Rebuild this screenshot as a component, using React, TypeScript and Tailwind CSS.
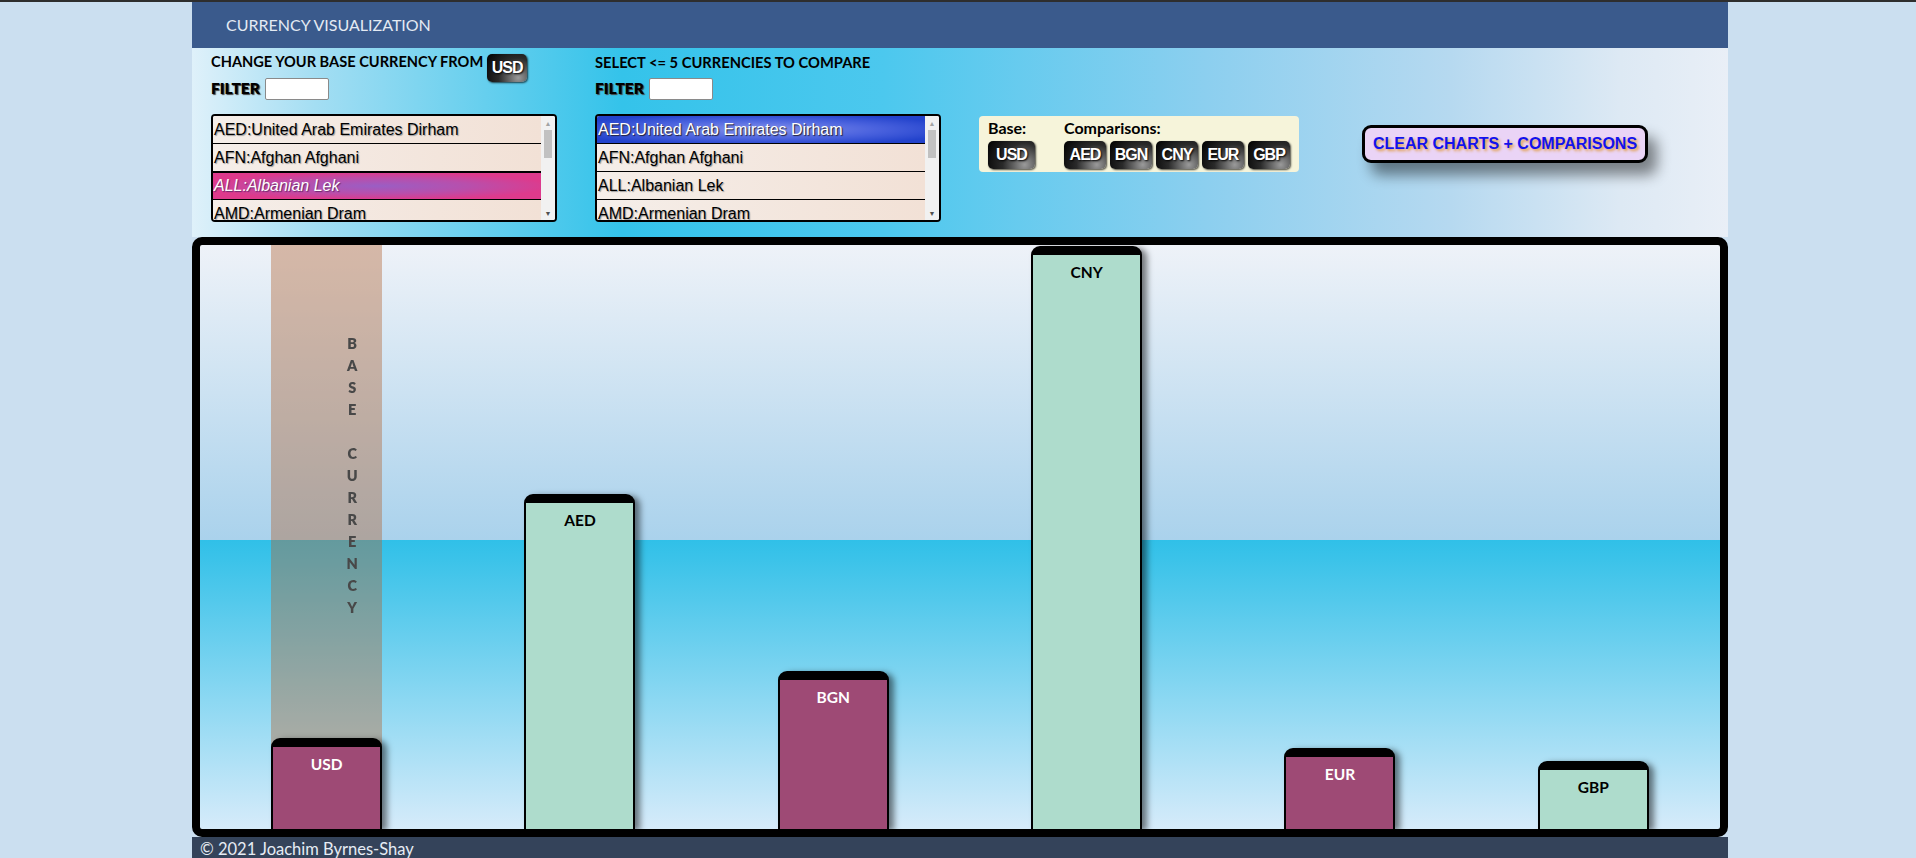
import React from 'react';

interface Bar {
  code: string;
  height: number;
  pink?: boolean;
  base?: boolean;
}

const bars: Bar[] = [
  { code: 'USD', height: 91, pink: true, base: true },
  { code: 'AED', height: 335 },
  { code: 'BGN', height: 158, pink: true },
  { code: 'CNY', height: 583 },
  { code: 'EUR', height: 81, pink: true },
  { code: 'GBP', height: 68 },
];

const currencies = [
  'AED:United Arab Emirates Dirham',
  'AFN:Afghan Afghani',
  'ALL:Albanian Lek',
  'AMD:Armenian Dram',
];

const comparisons = ['AED', 'BGN', 'CNY', 'EUR', 'GBP'];

function Badge({ code, width }: { code: string; width: string }) {
  return (
    <span
      className={`${width} inline-flex items-center justify-center h-[28px] rounded-[5px] bg-[radial-gradient(circle_at_78%_85%,#9a9a9a_0%,#2a2a2a_50%,#000_100%)] text-white font-bold text-[16px] font-['Liberation_Sans',Arial,sans-serif] tracking-[-1px] [text-shadow:1px_1px_2px_#000] shadow-[1px_1px_2px_rgba(0,0,0,0.7)]`}
    >
      {code}
    </span>
  );
}

function ListBox({ selected, variant }: { selected: number; variant: 'pink' | 'blue' }) {
  return (
    <div className="w-[346px] h-[108px] border-2 border-black rounded-[4px] bg-white flex overflow-hidden">
      <div className="flex-1 overflow-hidden">
        {currencies.map((c, i) => {
          const isSel = i === selected;
          let rowClass = 'bg-[linear-gradient(to_right,#f5eee9,#f2e1d6)] text-black [text-shadow:1px_1px_1px_#9a9a9a]';
          if (isSel && variant === 'pink') {
            rowClass = 'bg-[radial-gradient(ellipse_at_center,#9a5ec4_0%,#b84fac_40%,#de3a8c_75%)] text-white italic [text-shadow:1px_1px_1px_#6a2a6a] border-y border-[#7aa0e8]';
          }
          if (isSel && variant === 'blue') {
            rowClass = 'bg-[radial-gradient(ellipse_at_center,#8592ec_0%,#4a62de_50%,#2343cc_85%)] text-white [text-shadow:1px_1px_1px_#223]';
          }
          return (
            <div
              key={c}
              className={`${rowClass} h-[28px] border-b border-black flex items-center pl-[1px] text-[16px] font-['Liberation_Sans',Arial,sans-serif] whitespace-nowrap`}
            >
              {c}
            </div>
          );
        })}
      </div>
      <div className="w-[14px] bg-[#f1f1f1] flex flex-col items-center">
        <span className="text-[7px] leading-[14px] text-[#a3a3a3]">▲</span>
        <div className="w-[8px] h-[28px] bg-[#c1c1c1]" />
        <div className="flex-1" />
        <span className="text-[7px] leading-[14px] text-[#505050]">▼</span>
      </div>
    </div>
  );
}

function FilterRow() {
  return (
    <div className="flex items-center h-[22px] mt-[3px]">
      <span className="font-extrabold text-[15.5px] text-black [text-shadow:1px_1px_1px_#444] mr-[5px]">FILTER</span>
      <input className="w-[64px] h-[22px] bg-white border border-[#8a8a8a] rounded-[2px] outline-none" />
    </div>
  );
}

export default function App() {
  return (
    <div className="min-h-screen bg-[#cbdff0] border-t-2 border-[#2e2e2e] font-['Lato','Open_Sans',sans-serif]">
      <div className="ml-[192px] w-[1536px]">
        {/* Header */}
        <div className="h-[46px] bg-[#3a5a8c] flex items-center pl-[34px]">
          <span className="text-[16px] text-[#e4eaf3]">CURRENCY VISUALIZATION</span>
        </div>

        {/* Controls */}
        <div className="h-[189px] bg-[linear-gradient(to_right,#dff1fa_0%,#a4def3_8%,#34c3ea_28%,#4cc8ee_45%,#8ccfef_66%,#b6d9f0_82%,#dde9f4_93%,#e9eff7_100%)] flex pl-[19px] pt-[5px]">
          <div className="w-[384px]">
            <div className="flex items-start h-[22px]">
              <span className="font-bold text-[14.6px] leading-[18px] text-black">CHANGE YOUR BASE CURRENCY FROM</span>
              <span className="mt-[1px] ml-[4px]">
                <Badge code="USD" width="w-[40px]" />
              </span>
            </div>
            <FilterRow />
            <div className="mt-[14px]">
              <ListBox selected={2} variant="pink" />
            </div>
          </div>

          <div className="w-[384px]">
            <div className="flex items-start h-[22px]">
              <span className="font-bold text-[14.7px] leading-[18px] text-black">SELECT &lt;= 5 CURRENCIES TO COMPARE</span>
            </div>
            <FilterRow />
            <div className="mt-[14px]">
              <ListBox selected={0} variant="blue" />
            </div>
          </div>

          <div className="mt-[63px] w-[320px] h-[56px] bg-[#f6f4da] rounded-[4px] flex pl-[9px] pt-[2px] gap-[29px]">
            <div className="flex flex-col">
              <span className="font-bold text-[16px] leading-[20px] text-black">Base:</span>
              <div className="mt-[3px]">
                <Badge code="USD" width="w-[47px]" />
              </div>
            </div>
            <div className="flex flex-col">
              <span className="font-bold text-[16px] leading-[20px] text-black">Comparisons:</span>
              <div className="mt-[3px] flex gap-[4px]">
                {comparisons.map((c) => (
                  <Badge key={c} code={c} width="w-[42px]" />
                ))}
              </div>
            </div>
          </div>

          <div className="ml-[63px] mt-[72px]">
            <button className="w-[286px] h-[38px] bg-[#ead4f6] border-[3px] border-black rounded-[9px] shadow-[9px_12px_14px_rgba(0,0,0,0.45)] text-[#1212ee] font-bold text-[16px] font-['Liberation_Sans',Arial,sans-serif] [text-shadow:2px_2px_3px_#e09a3a]">
              CLEAR CHARTS + COMPARISONS
            </button>
          </div>
        </div>

        {/* Chart */}
        <div className="h-[600px] border-8 border-black rounded-[10px] bg-[linear-gradient(to_bottom,#eef2f8_0%,#aad2ec_50.5%,#30c0e8_50.5%,#d6ebfa_100%)] overflow-hidden">
          <div className="h-full flex justify-around items-end">
            {bars.map((b) => (
              <div key={b.code} className="relative w-[111px] h-full flex flex-col justify-end">
                {b.base && (
                  <div className="absolute inset-0 bg-[rgba(178,98,48,0.4)]">
                    <div className="ml-[75px] mt-[88px] flex flex-col items-center w-[12px] text-[14.5px] font-extrabold text-[#484848] blur-[0.7px]">
                      {'BASE CURRENCY'.split('').map((ch, i) => (
                        <span key={i} className="h-[22px] leading-[22px]">{ch === ' ' ? '\u00a0' : ch}</span>
                      ))}
                    </div>
                  </div>
                )}
                <div
                  className={`relative border-x-2 border-t-[9px] border-black rounded-t-[9px] shadow-[5px_2px_6px_rgba(0,0,0,0.5)] pt-[8px] text-center text-[15.5px] font-bold leading-[18px] ${
                    b.pink ? 'bg-[#9e4a75] text-white' : 'bg-[#aedccc] text-black'
                  }`}
                  style={{ height: b.height }}
                >
                  {b.code}
                </div>
              </div>
            ))}
          </div>
        </div>

        {/* Footer */}
        <div className="h-[30px] bg-[#34435a] pl-[8px]">
          <span className="text-[16.5px] leading-[20px] text-[#e6ecf4]">© 2021 Joachim Byrnes-Shay</span>
        </div>
      </div>
    </div>
  );
}
